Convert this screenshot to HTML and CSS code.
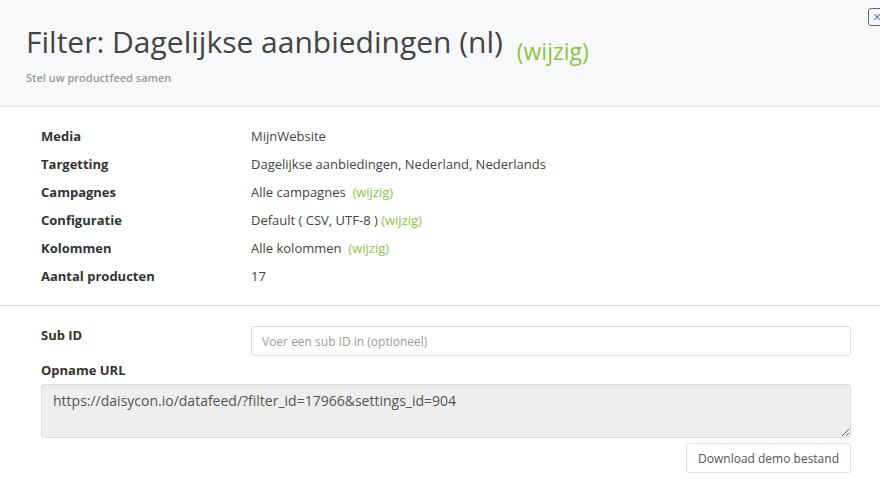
FILE: index.html
```html
<!doctype html>
<html lang="nl">
  <head>
    <meta charset="UTF-8" />
    <meta name="viewport" content="width=device-width, initial-scale=1.0" />
    <title>Filter: Dagelijkse aanbiedingen (nl)</title>
    <link rel="stylesheet" href="styles.css">
  </head>
  <body>
    <div class="modal">
      <div class="modal-header">
        <button class="close" type="button">&times;</button>
        <h1>Filter: Dagelijkse aanbiedingen (nl) <a href="#">(wijzig)</a></h1>
        <p class="subtitle">Stel uw productfeed samen</p>
      </div>
      <div class="details">
        <div class="row">
          <div class="label">Media</div>
          <div class="value">MijnWebsite</div>
        </div>
        <div class="row">
          <div class="label">Targetting</div>
          <div class="value">Dagelijkse aanbiedingen, Nederland, Nederlands</div>
        </div>
        <div class="row">
          <div class="label">Campagnes</div>
          <div class="value">Alle campagnes &nbsp;<a href="#">(wijzig)</a></div>
        </div>
        <div class="row">
          <div class="label">Configuratie</div>
          <div class="value">Default ( CSV, UTF-8 ) <a href="#">(wijzig)</a></div>
        </div>
        <div class="row">
          <div class="label">Kolommen</div>
          <div class="value">Alle kolommen &nbsp;<a href="#">(wijzig)</a></div>
        </div>
        <div class="row">
          <div class="label">Aantal producten</div>
          <div class="value">17</div>
        </div>
      </div>
      <div class="feed">
        <div class="form-row">
          <label for="subid">Sub ID</label>
          <input type="text" id="subid" placeholder="Voer een sub ID in (optioneel)" />
        </div>
        <label class="url-label" for="url">Opname URL</label>
        <textarea id="url" readonly>https://daisycon.io/datafeed/?filter_id=17966&amp;settings_id=904</textarea>
        <div class="actions">
          <button type="button" class="btn">Download demo bestand</button>
        </div>
      </div>
    </div>
  </body>
</html>
```

FILE: styles.css
```css
body {
  margin: 0;
  font-family: "Open Sans", Arial, sans-serif;
  font-size: 13px;
  color: #333;
  background-color: #fff;
}

a {
  color: #8cc63f;
  text-decoration: none;
}

.modal-header {
  position: relative;
  background-color: #f7f8fa;
  border-bottom: 1px solid #e2e2e2;
  padding: 22px 26px 20px;
  height: 64px;
}

.modal-header h1 {
  margin: 0;
  height: 40px;
  font-size: 30px;
  font-weight: 400;
  color: #444;
  line-height: 40px;
}

.modal-header h1 a {
  font-size: 23px;
  margin-left: 6px;
  line-height: 1;
  vertical-align: -7px;
}

.subtitle {
  margin: 8px 0 0;
  font-size: 11px;
  font-weight: 600;
  color: #999;
}

.close {
  position: absolute;
  top: 8px;
  right: -10px;
  width: 22px;
  height: 18px;
  padding: 0 0 0 4px;
  text-align: left;
  background-color: #f7f8fa;
  border: 1px solid #666;
  border-radius: 3px;
  color: #5c7bb8;
  font-size: 14px;
  line-height: 14px;
}

.details {
  padding: 15px 41px 15px;
  border-bottom: 1px solid #e2e2e2;
}

.row {
  display: flex;
  height: 28px;
  line-height: 28px;
}

.label {
  width: 210px;
  font-weight: 700;
}

.value {
  color: #444;
}

.feed {
  padding: 20px 29px 0 41px;
}

.form-row {
  display: flex;
  align-items: flex-start;
}

.form-row label {
  width: 210px;
  font-weight: 700;
  line-height: 18px;
}

.form-row input {
  flex: 1;
  box-sizing: border-box;
  height: 30px;
  padding: 0 10px;
  border: 1px solid #ddd;
  border-radius: 3px;
  font-family: inherit;
  font-size: 12px;
  color: #555;
}

.form-row input::placeholder {
  color: #999;
}

.url-label {
  display: block;
  margin-top: 5px;
  font-weight: 700;
  line-height: 18px;
}

textarea {
  display: block;
  box-sizing: border-box;
  width: 100%;
  height: 54px;
  margin-top: 5px;
  padding: 6px 11px;
  background-color: #eee;
  border: 1px solid #ddd;
  border-radius: 3px;
  font-family: inherit;
  font-size: 14px;
  color: #555;
}

.actions {
  display: flex;
  justify-content: flex-end;
  margin-top: 5px;
}

.btn {
  height: 30px;
  padding: 0 11px;
  background-color: #fff;
  border: 1px solid #ddd;
  border-radius: 3px;
  font-family: inherit;
  font-size: 12px;
  color: #555;
}
```
